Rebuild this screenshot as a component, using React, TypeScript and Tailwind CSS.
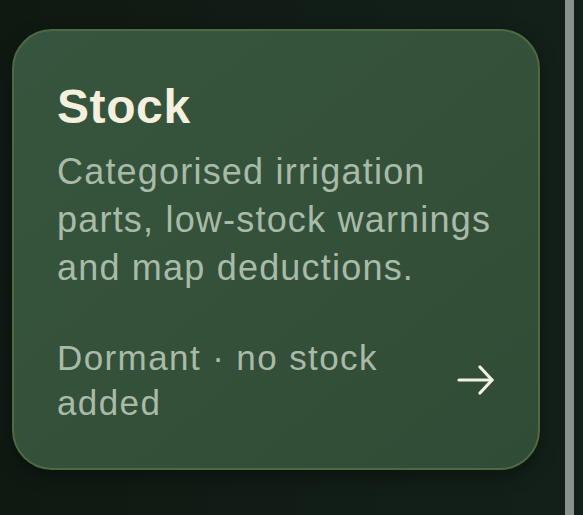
import React from 'react';

const ArrowIcon = () => (
  <svg width="37" height="30" viewBox="0 0 37 30" fill="none" stroke="#f3f0e4" strokeWidth="3.2" strokeLinecap="round" strokeLinejoin="round">
    <path d="M2 15h33" />
    <path d="M23 2l12 13-12 13" />
  </svg>
);

const StockCard = () => {
  return (
    <div className="w-[528px] rounded-[40px] border-2 border-[#4d6a40] bg-gradient-to-br from-[#37553e] to-[#314c36] pl-[43px] pr-[44px] pt-[48px] pb-[43px] shadow-[0_6px_18px_rgba(0,0,0,0.35)]">
      <h3 className="text-[48px] leading-[56px] font-bold tracking-[0.6px] text-[#f4f0dd]">
        Stock
      </h3>
      <p className="mt-[13px] text-[36px] leading-[48px] tracking-[1.2px] text-[#a9bba8] max-w-[440px]">
        Categorised irrigation parts, low-stock warnings and map deductions.
      </p>
      <div className="mt-[43px] flex items-center justify-between">
        <p className="w-[340px] text-[35px] leading-[45px] tracking-[1.4px] text-[#a9bba8]">
          Dormant · no stock added
        </p>
        <ArrowIcon />
      </div>
    </div>
  );
};

export default function App() {
  return (
    <div
      className="flex h-[515px] w-[583px] overflow-hidden bg-gradient-to-r from-[#0f1912] to-[#13201a]"
      style={{ fontFamily: '"Liberation Sans", Arial, sans-serif' }}
    >
      <div className="flex-1 pl-[12px] pt-[29px]">
        <StockCard />
      </div>
      <div className="w-[9px] bg-[#8a928d]" />
      <div className="w-[9px] bg-[#13201a]" />
    </div>
  );
}
